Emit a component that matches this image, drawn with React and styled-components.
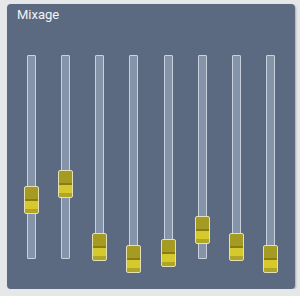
import React from 'react'
import styled, { createGlobalStyle } from 'styled-components'

const GlobalStyle = createGlobalStyle`
  body {
    margin: 0;
    background: #e6e7e9;
    font-family: Roboto, "Liberation Sans", sans-serif;
  }
`

const levels = [0.289, 0.368, 0.059, 0, 0.029, 0.142, 0.059, 0]

const TRACK_H = 204
const THUMB_H = 28

function Fader({ value }) {
  const top = TRACK_H - THUMB_H / 2 - value * TRACK_H - 1
  return (
    <Column>
      <Track>
        <Thumb style={{ top }} />
      </Track>
    </Column>
  )
}

function App() {
  return (
    <>
      <GlobalStyle />
      <Panel>
        <Title>Mixage</Title>
        <Faders>
          {levels.map((v, i) => (
            <Fader key={i} value={v} />
          ))}
        </Faders>
      </Panel>
    </>
  )
}

const Panel = styled.div`
  box-sizing: border-box;
  margin: 4px 0 0 7px;
  width: 288px;
  height: 285px;
  background: #5b6a80;
  border-radius: 4px;
  box-shadow: 1px 1px 2px rgba(0, 0, 0, 0.25);
  padding: 0 7px;
`

const Title = styled.div`
  color: #f2f4f7;
  font-size: 13px;
  line-height: 16px;
  padding: 3px 0 0 3px;
`

const Faders = styled.div`
  display: grid;
  grid-template-columns: repeat(8, 1fr);
  margin-top: 32px;
`

const Column = styled.div`
  display: flex;
  justify-content: center;
`

const Track = styled.div`
  position: relative;
  box-sizing: border-box;
  width: 9px;
  height: ${TRACK_H}px;
  border: 1px solid #c9d1dc;
  background: #8594a8;
  border-radius: 1px;
`

const Thumb = styled.div`
  position: absolute;
  left: -4px;
  box-sizing: border-box;
  width: 15px;
  height: ${THUMB_H}px;
  border: 1px solid #e4e0b8;
  border-radius: 2px;
  background: linear-gradient(
    to bottom,
    #a69b22 0%,
    #a69b22 48%,
    #877d14 48%,
    #877d14 53%,
    #d6c92c 53%,
    #d6c92c 86%,
    #b0a526 86%,
    #b0a526 100%
  );
`

export default App
